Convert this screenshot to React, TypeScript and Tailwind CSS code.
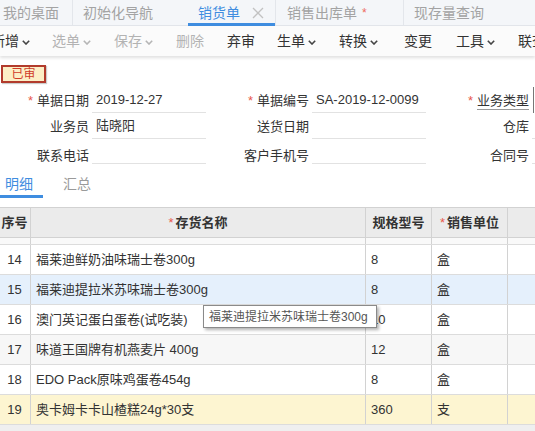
import { Fragment } from "react";

const Chevron = ({ muted }: { muted?: boolean }) => (
  <svg width="8" height="5" viewBox="0 0 8 5" className="ml-[3px] mt-[2px]">
    <polyline
      points="0.8,0.8 4,4 7.2,0.8"
      fill="none"
      stroke={muted ? "#b5b5b5" : "#444"}
      strokeWidth="1.6"
    />
  </svg>
);

const ToolSep = ({ ml }: { ml: string }) => <div className={`w-px h-[14px] bg-[#dcdcdc] ${ml}`} />;

const Star = () => <span className="text-[#e8574d] mr-[4px]">*</span>;

type Row = { no: number; name: string; spec: string; unit: string; bg: string };

const rows: Row[] = [
  { no: 14, name: "福莱迪鲜奶油味瑞士卷300g", spec: "8", unit: "盒", bg: "bg-white" },
  { no: 15, name: "福莱迪提拉米苏味瑞士卷300g", spec: "8", unit: "盒", bg: "bg-[#e5f0fc]" },
  { no: 16, name: "澳门英记蛋白蛋卷(试吃装)", spec: "10", unit: "盒", bg: "bg-white" },
  { no: 17, name: "味道王国牌有机燕麦片 400g", spec: "12", unit: "盒", bg: "bg-[#f7f7f7]" },
  { no: 18, name: "EDO Pack原味鸡蛋卷454g", spec: "8", unit: "盒", bg: "bg-white" },
  { no: 19, name: "奥卡姆卡卡山楂糕24g*30支", spec: "360", unit: "支", bg: "bg-[#fdf5d1]" },
];

const FormCell = ({
  label,
  value,
  star,
  link,
  box,
}: {
  label: string;
  value?: string;
  star?: boolean;
  link?: boolean;
  box?: boolean;
}) => (
  <div className="flex w-[220px] h-full items-stretch shrink-0">
    <div className="w-[89px] shrink-0 flex items-center justify-end text-[#333]">
      {star && <Star />}
      <span className={link ? "underline decoration-[#9a9a9a] underline-offset-[4px]" : ""}>{label}</span>
    </div>
    <div
      className={`ml-[3px] w-[114px] shrink-0 flex items-center pl-[4px] text-[#333] ${
        box ? "border-l border-[#777] ml-[4px]" : "border-b border-[#e2e2e2]"
      }`}
    >
      {value}
    </div>
  </div>
);

export default function App() {
  return (
    <div className="w-[535px] h-[431px] overflow-hidden bg-white relative font-['Liberation_Sans','Noto_Sans_CJK_SC',sans-serif] text-[13px] leading-none">
      {/* top tab bar */}
      <div className="h-[26px] bg-[#f4f6f9] border-b border-[#e3e6eb] flex text-[14px] text-[#a3a3a3] whitespace-nowrap">
        <div className="ml-[-7px] w-[80px] shrink-0 pl-[10px] flex items-center border-r border-[#e3e6eb]">我的桌面</div>
        <div className="w-[115px] shrink-0 pl-[10px] flex items-center">初始化导航</div>
        <div className="w-[87px] shrink-0 pl-[10px] flex items-center relative text-[#3f8de0]">
          销货单
          <svg width="12" height="12" viewBox="0 0 12 12" className="ml-[12px]">
            <path d="M1 1L11 11M11 1L1 11" stroke="#c2c2c2" strokeWidth="1.3" />
          </svg>
          <span className="absolute left-0 right-0 bottom-[-1px] h-[3px] bg-[#3f8de0]" />
        </div>
        <div className="w-[129px] shrink-0 pl-[11px] flex items-center border-l border-r border-[#e3e6eb]">
          销售出库单<span className="text-[#ee6a5f] ml-[5px] text-[12px]">*</span>
        </div>
        <div className="pl-[10px] flex items-center">现存量查询</div>
      </div>

      {/* toolbar */}
      <div className="h-[30px] bg-[#fbfbfb] flex items-center text-[14px] text-[#333] whitespace-nowrap shadow-[0_2px_3px_rgba(0,0,0,0.12)] relative z-10">
        <div className="ml-[-9px] flex items-center">新增<Chevron /></div>
        <div className="ml-[22px] flex items-center text-[#b3b3b3]">选单<Chevron muted /></div>
        <div className="ml-[23px] flex items-center text-[#b3b3b3]">保存<Chevron muted /></div>
        <div className="ml-[23px] flex items-center text-[#b3b3b3]">删除</div>
        <ToolSep ml="ml-[13px]" />
        <div className="ml-[10px]">弃审</div>
        <ToolSep ml="ml-[12px]" />
        <div className="ml-[10px] flex items-center">生单<Chevron /></div>
        <div className="ml-[23px] flex items-center">转换<Chevron /></div>
        <ToolSep ml="ml-[15px]" />
        <div className="ml-[11px]">变更</div>
        <ToolSep ml="ml-[14px]" />
        <div className="ml-[10px] flex items-center">工具<Chevron /></div>
        <div className="ml-[23px]">联查</div>
      </div>

      {/* stamp */}
      <div className="mt-[9px] ml-[1px] w-[45px] h-[18px] border-2 border-[#b23b2c] bg-[#fcefc6] text-[#cf3b2a] text-[12px] flex items-center justify-center shadow-[1px_1px_1px_rgba(0,0,0,0.2)]">
        已审
      </div>

      {/* form */}
      <div className="mt-[4px] flex flex-col whitespace-nowrap">
        <div className="h-[26px] flex">
          <FormCell label="单据日期" value="2019-12-27" star />
          <FormCell label="单据编号" value="SA-2019-12-0099" star />
          <FormCell label="业务类型" star link box />
        </div>
        <div className="h-[26px] flex">
          <FormCell label="业务员" value="陆晓阳" />
          <FormCell label="送货日期" />
          <FormCell label="仓库" />
        </div>
        <div className="h-[25px] pt-[8px] flex">
          <FormCell label="联系电话" />
          <FormCell label="客户手机号" />
          <FormCell label="合同号" />
        </div>
      </div>

      {/* detail tabs */}
      <div className="mt-[10px] flex text-[14px]">
        <div className="w-[43px] flex flex-col">
          <div className="h-[20px] pl-[5px] flex items-center text-[#3f8de0]">明细</div>
          <div className="mt-px h-[3px] bg-[#3f8de0]" />
        </div>
        <div className="ml-[20px] h-[20px] flex items-center text-[#9a9a9a]">汇总</div>
      </div>

      {/* table */}
      <div className="mt-[9px] ml-[-2px] w-[640px] text-[#333] whitespace-nowrap">
        <div className="h-[31px] flex bg-[#ebebeb] border-t border-b border-[#d2d2d2] font-bold">
          <div className="w-[33px] shrink-0 border-r border-[#d2d2d2] flex items-center justify-center pl-[1px]">序号</div>
          <div className="w-[335px] shrink-0 border-r border-[#d2d2d2] flex items-center justify-center">
            <span className="text-[#e8574d] font-normal mr-[2px]">*</span>存货名称
          </div>
          <div className="w-[66px] shrink-0 border-r border-[#d2d2d2] flex items-center justify-center">规格型号</div>
          <div className="w-[76px] shrink-0 border-r border-[#d2d2d2] flex items-center justify-center">
            <span className="text-[#e8574d] font-normal mr-[2px]">*</span>销售单位
          </div>
          <div className="flex-1" />
        </div>
        <div className="h-[7px] flex bg-[#f9f9f9] border-b border-[#dcdcdc]">
          <div className="w-[33px] shrink-0 border-r border-[#d2d2d2]" />
          <div className="w-[335px] shrink-0 border-r border-[#d2d2d2]" />
          <div className="w-[66px] shrink-0 border-r border-[#d2d2d2]" />
          <div className="w-[76px] shrink-0 border-r border-[#d2d2d2]" />
        </div>
        {rows.map((r) => (
          <Fragment key={r.no}>
            <div className={`h-[30px] flex border-b border-[#dcdcdc] ${r.bg}`}>
              <div className="w-[33px] shrink-0 border-r border-[#d2d2d2] flex items-center justify-center pl-[1px]">{r.no}</div>
              <div className="w-[335px] shrink-0 border-r border-[#d2d2d2] flex items-center pl-[5px]">{r.name}</div>
              <div className="w-[66px] shrink-0 border-r border-[#d2d2d2] flex items-center pl-[5px]">{r.spec}</div>
              <div className="w-[76px] shrink-0 border-r border-[#d2d2d2] flex items-center pl-[5px]">{r.unit}</div>
              <div className="flex-1" />
            </div>
          </Fragment>
        ))}
        <div className="h-[20px] bg-[#efefef]" />
      </div>

      {/* tooltip */}
      <div className="absolute left-[203px] top-[305px] w-[174px] h-[23px] bg-white border border-[#8a8a8a] shadow-[2px_2px_3px_rgba(0,0,0,0.3)] text-[12px] text-[#555] flex items-center pl-[5px] whitespace-nowrap z-20">
        福莱迪提拉米苏味瑞士卷300g
      </div>
    </div>
  );
}
